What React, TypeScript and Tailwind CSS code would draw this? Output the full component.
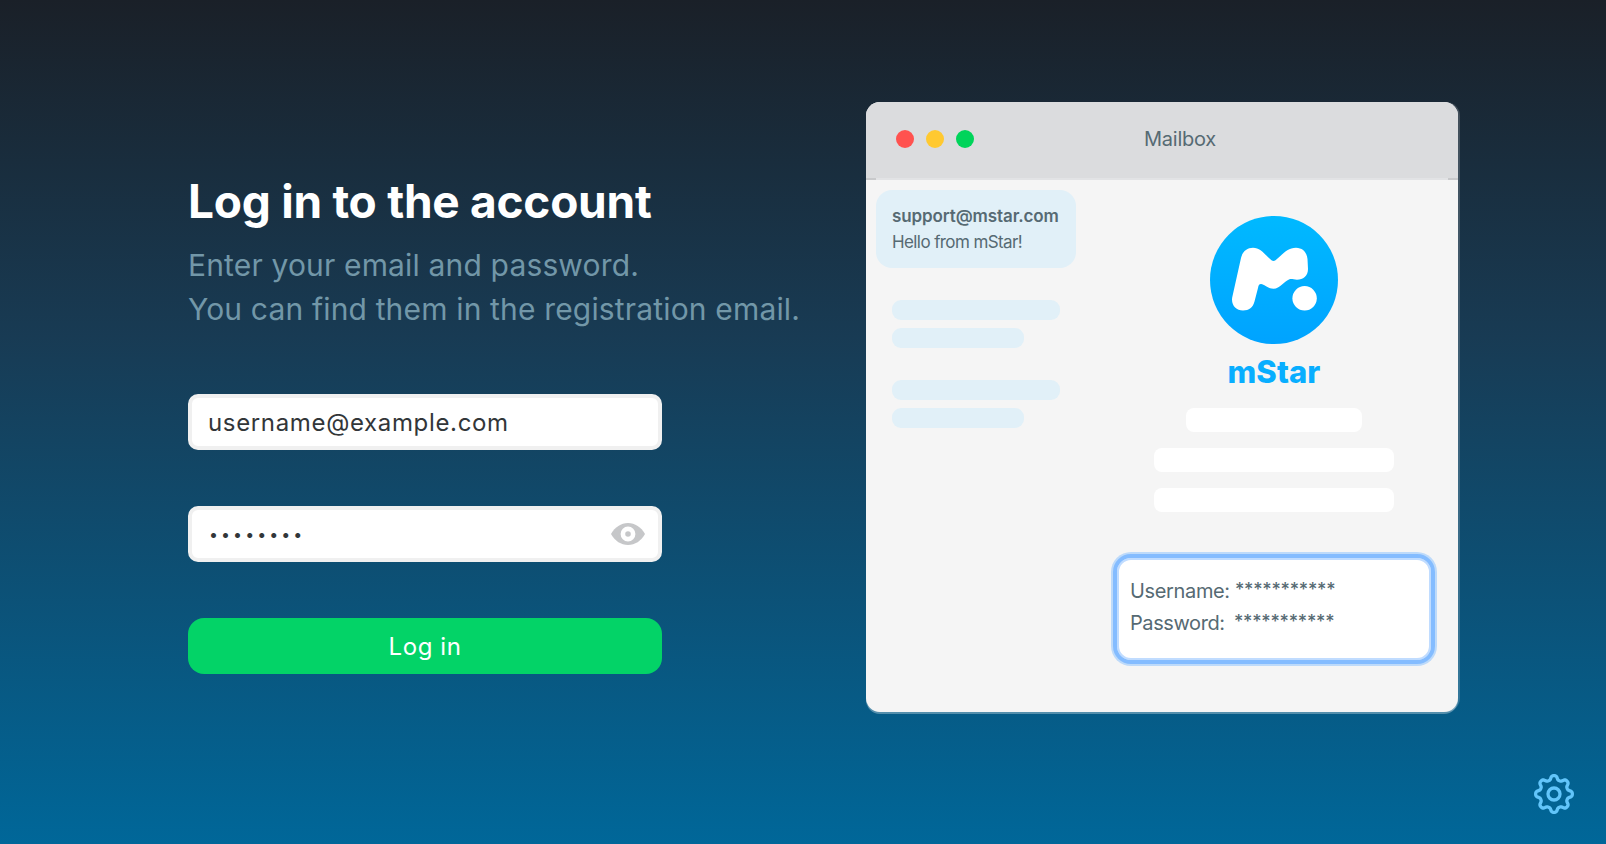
import { useState } from "react";

function Logo() {
  return (
    <svg width="128" height="128" viewBox="0 0 128 128">
      <defs>
        <linearGradient id="logo" x1="0" y1="0" x2="0" y2="1">
          <stop offset="0" stopColor="#00b9ff" />
          <stop offset="1" stopColor="#00a3ff" />
        </linearGradient>
      </defs>
      <circle cx="64" cy="64" r="64" fill="url(#logo)" />
      <path
        d="M31 42C32.5 35.500 37 31.800 43 31.800C51 31.800 55.500 39.500 61.500 44.300Q63.500 45.800 65.500 44.300C71.500 39.500 77 31.800 86 31.800C93 31.800 97 37 97.500 43L98 53C98 60 93 63.800 87 63.800C83.500 63.800 81.500 62.500 79 63.500C74 65.500 70 72.700 63.500 72.700C57 72.700 54.500 68 51 68C49 68 48.500 69.500 48 72L44.500 85.500C43 91.500 39 94.500 33 94.500C26 94.500 21 89 22.200 81.500Z"
        fill="#fff"
      />
      <circle cx="94.600" cy="82.300" r="12.200" fill="#fff" />
    </svg>
  );
}

function EyeIcon() {
  return (
    <svg width="34" height="22" viewBox="0 0 34 22">
      <path d="M0 11C4 4 10 0 17 0s13 4 17 11c-4 7-10 11-17 11S4 18 0 11Z" fill="#c6c7c9" />
      <circle cx="17" cy="11" r="5.100" fill="#c6c7c9" stroke="#fff" strokeWidth="4.600" />
    </svg>
  );
}

// Outline of an eight-toothed cog centred on 20,20
const gearPoints = Array.from({ length: 160 }, (_, i) => {
  const angle = (i / 160) * Math.PI * 2;
  const radius = 16.3 + 2.2 * Math.tanh(1.6 * Math.cos(angle * 8));
  return `${(20 + radius * Math.cos(angle)).toFixed(2)},${(20 + radius * Math.sin(angle)).toFixed(2)}`;
}).join(" ");

function GearIcon() {
  return (
    <svg width="40" height="40" viewBox="0 0 40 40" fill="none" stroke="#62c5fa" strokeWidth="3.300" strokeLinejoin="round">
      <circle cx="20" cy="20" r="6" />
      <polygon points={gearPoints} />
    </svg>
  );
}

function LoginForm() {
  const [visible, setVisible] = useState(false);

  return (
    <form className="w-[630px] pt-[172px]" onSubmit={(e) => e.preventDefault()}>
      <h1 className="text-[46px] leading-[58px] font-bold tracking-[-0.25px] whitespace-nowrap text-white">
        Log in to the account
      </h1>
      <p className="mt-[13px] text-[30px] leading-[44px] tracking-[0.16px] whitespace-nowrap text-[#7297a8]">
        Enter your email and password.
        <br />
        You can find them in the registration email.
      </p>
      <div className="mt-[63px] flex w-[474px] flex-col gap-14">
        <input
          type="text"
          defaultValue="username@example.com"
          className="h-14 rounded-[10px] border-4 border-[#f0f0f0] bg-white px-4 text-2xl tracking-[0.65px] text-[#323639] outline-none"
        />
        <div className="flex h-14 items-center rounded-[10px] border-4 border-[#f0f0f0] bg-white pr-[13px] pl-[17px]">
          {visible ? (
            <span className="min-w-0 flex-1 text-2xl tracking-[0.65px] text-[#323639]">password</span>
          ) : (
            <span className="min-w-0 flex-1 text-base tracking-[3.050px] text-[#323639]">••••••••</span>
          )}
          <button type="button" aria-label="Show password" onClick={() => setVisible(!visible)}>
            <EyeIcon />
          </button>
        </div>
        <button className="h-14 rounded-2xl bg-[#03d367] pt-0.5 text-2xl tracking-[0.6px] text-white">
          Log in
        </button>
      </div>
    </form>
  );
}

function MailPreview() {
  return (
    <div className="mt-[102px] ml-12 h-[610px] w-[592px] overflow-hidden rounded-[14px] bg-[#f5f5f5] text-[#566a73] shadow-[2px_0_0_#ffffff2e,0_2px_0_#ffffff50]">
      {/* Title bar */}
      <div className="flex h-[76px] items-start bg-[#dbdcde] pt-[23px] pl-[30px]">
        <div className="flex gap-3 pt-[5px]">
          <span className="size-[18px] rounded-full bg-[#ff524f]" />
          <span className="size-[18px] rounded-full bg-[#ffc930]" />
          <span className="size-[18px] rounded-full bg-[#00d45a]" />
        </div>
        <span className="ml-[170px] text-xl leading-7 tracking-[-0.25px]">Mailbox</span>
      </div>
      <div className="flex h-0.5 justify-between bg-[#e2e3e5]">
        <span className="w-2.5 bg-[#c8c9cb]" />
        <span className="w-2.5 bg-[#c8c9cb]" />
      </div>

      <div className="flex justify-between">
        {/* Message list */}
        <div className="pt-[10px] pl-[10px]">
          <div className="h-[78px] w-[200px] rounded-2xl bg-[#e1f0f8] pt-[13px] pl-4 whitespace-nowrap">
            <p className="text-[17px] leading-[26px] font-semibold tracking-[-0.1px]">support@mstar.com</p>
            <p className="text-[17px] leading-[26px] tracking-[-0.6px]">Hello from mStar!</p>
          </div>
          <div className="mt-8 ml-4 flex flex-col gap-8">
            {[0, 1].map((i) => (
              <div key={i} className="flex flex-col gap-2">
                <div className="h-5 w-[168px] rounded-[9px] bg-[#e1f0f8]" />
                <div className="h-5 w-[132px] rounded-[9px] bg-[#e1f0f8]" />
              </div>
            ))}
          </div>
        </div>

        {/* Opened message */}
        <div className="mr-5 flex w-[328px] flex-col items-center pt-9">
          <Logo />
          <p className="mt-[9px] text-[31px] leading-[38px] font-extrabold tracking-[0.1px] text-[#08aeff]">mStar</p>
          <div className="mt-[17px] flex flex-col items-center gap-4">
            <div className="h-6 w-44 rounded-lg bg-white" />
            <div className="h-6 w-60 rounded-lg bg-white" />
            <div className="h-6 w-60 rounded-lg bg-white" />
          </div>
          <div className="mt-[42px] h-[110px] w-[322px] rounded-[18px] border-4 border-[#84bcff] bg-white pt-[18px] pl-[13px] text-xl whitespace-nowrap shadow-[0_0_0_2px_#bddafa,inset_0_0_0_2px_#c0dcff]">
            <p className="flex h-8 leading-[31px]">
              <span className="w-[105px] tracking-[-0.35px]">Username:</span>
              <span className="text-lg leading-[27px] font-medium tracking-[-0.25px]">***********</span>
            </p>
            <p className="flex h-8 leading-[31px]">
              <span className="w-[104px] tracking-[-0.4px]">Password:</span>
              <span className="text-lg leading-[27px] font-medium tracking-[-0.25px]">***********</span>
            </p>
          </div>
        </div>
      </div>
    </div>
  );
}

export default function App() {
  return (
    <main className="flex h-screen overflow-hidden bg-linear-to-b/srgb from-[#1a2028] via-[#183b54] via-40% to-[#006799] pl-[188px] font-['Inter',sans-serif]">
      <LoginForm />
      <MailPreview />
      <button aria-label="Settings" className="mb-[30px] ml-auto mr-8 self-end">
        <GearIcon />
      </button>
    </main>
  );
}
